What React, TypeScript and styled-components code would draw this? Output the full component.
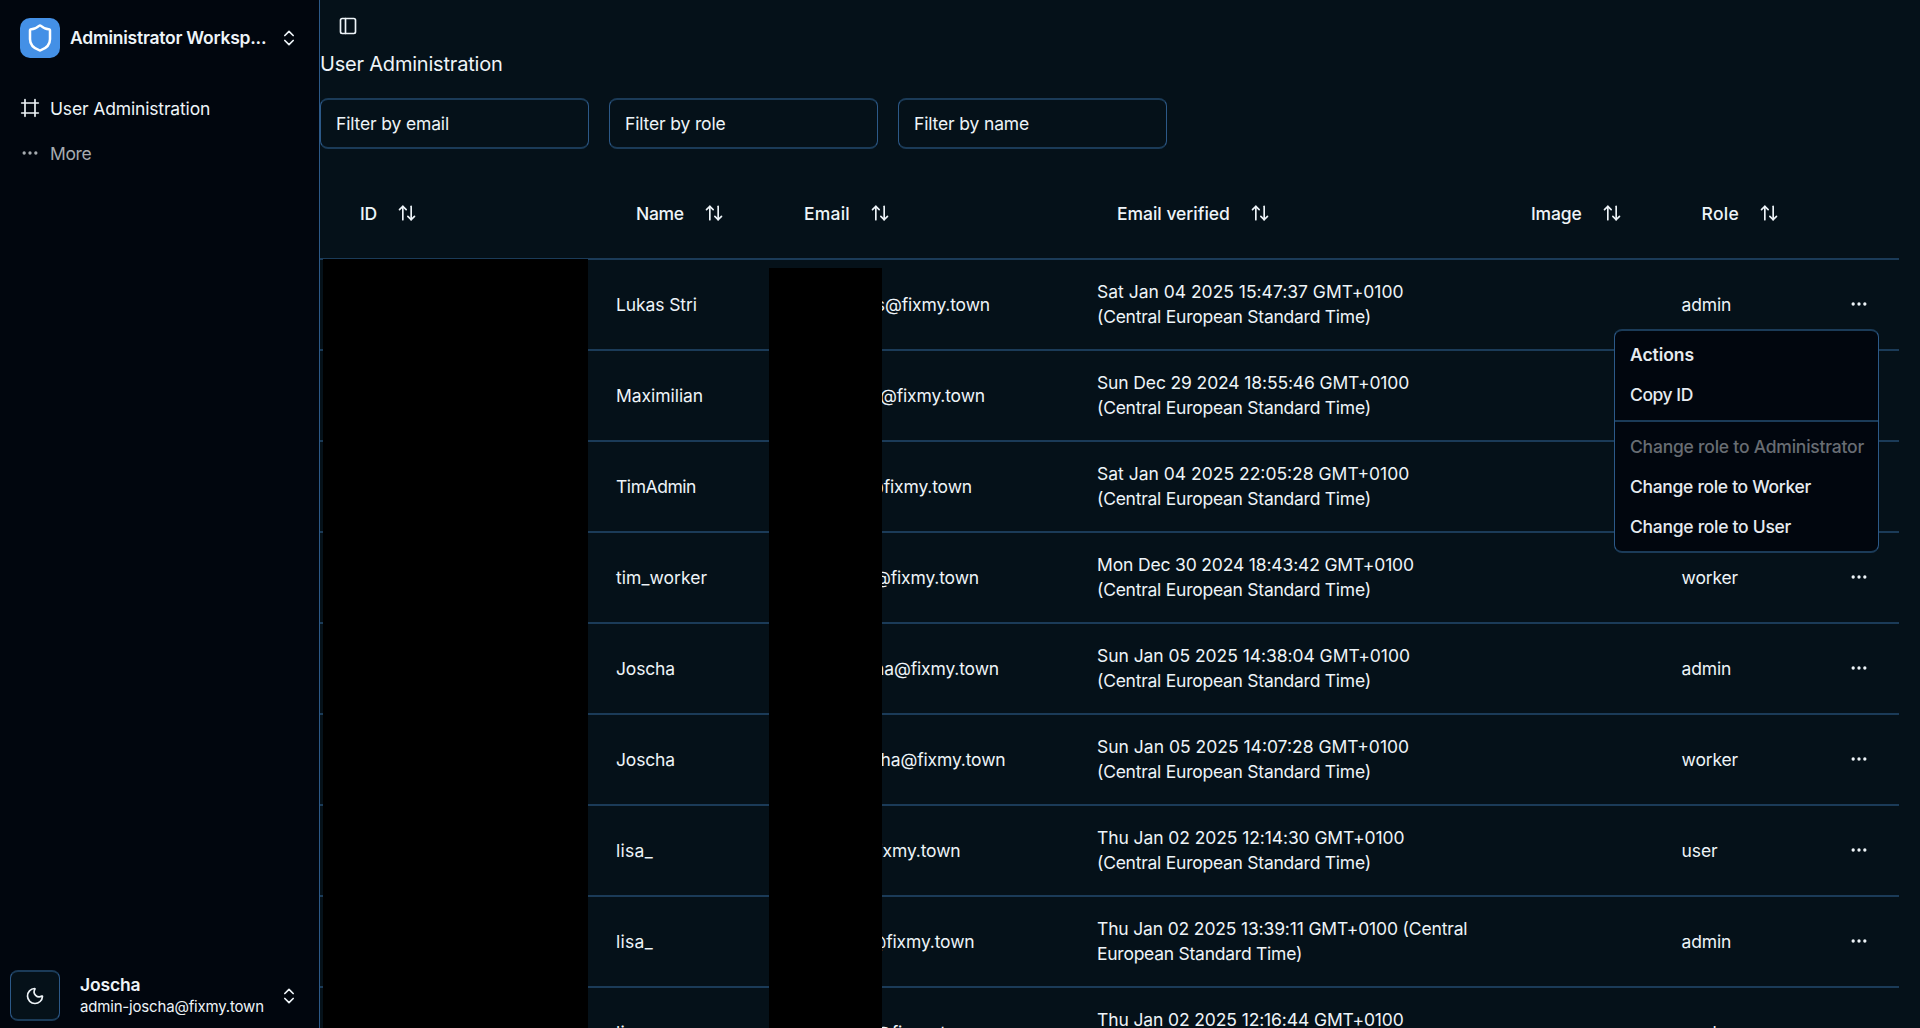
import React from "react";
import styled, { createGlobalStyle } from "styled-components";
import { ArrowUpDown, ChevronsUpDown, Ellipsis, Frame, Moon, PanelLeft, Shield } from "lucide-react";

const colors = {
  page: "#051119",
  sidebar: "#01060e",
  border: "#1b3b58",
  sideBorder: "#2c5988",
  text: "#eef4f8",
};

const GlobalStyle = createGlobalStyle`
  * { box-sizing: border-box; }
  html, body { margin: 0; height: 100%; overflow: hidden; background: ${colors.page}; }
  body { font-family: Inter, "Liberation Sans", sans-serif; font-size: 17.5px; line-height: 25px; color: ${colors.text}; letter-spacing: -0.15px; }
  button, input { font: inherit; color: inherit; letter-spacing: inherit; }
  svg { flex: none; }
`;

const Shell = styled.div`
  display: flex;
  width: 1920px;
  height: 1028px;
  overflow: hidden;
`;

const Sidebar = styled.aside`
  display: flex;
  flex-direction: column;
  width: 320px;
  flex: none;
  background: ${colors.sidebar};
  border-right: 1px solid ${colors.sideBorder};
`;

const Workspace = styled.div`
  display: flex;
  align-items: center;
  gap: 10px;
  height: 76px;
  padding: 0 20px;
`;

const Logo = styled.div`
  display: grid;
  place-items: center;
  width: 40px;
  height: 40px;
  border-radius: 10px;
  background: #4490e6;
  color: #fff;
`;

const WorkspaceName = styled.div`
  width: 199px;
  padding-bottom: 1px;
  font-weight: 600;
  letter-spacing: -0.24px;
  white-space: nowrap;
  overflow: hidden;
`;

const Nav = styled.nav`
  display: flex;
  flex-direction: column;
  gap: 5px;
  padding: 12px 10px;
`;

const NavItem = styled.a<{ $muted?: boolean }>`
  display: flex;
  align-items: center;
  gap: 10px;
  height: 40px;
  padding: 0 10px;
  color: ${(p) => (p.$muted ? "#a6abb0" : colors.text)};
  letter-spacing: ${(p) => (p.$muted ? -0.35 : -0.15)}px;
`;

const Footer = styled.div`
  display: flex;
  align-items: center;
  gap: 20px;
  margin-top: auto;
  height: 65px;
  padding: 0 20px 0 10px;
`;

const ThemeButton = styled.button`
  display: grid;
  place-items: center;
  width: 50px;
  height: 51px;
  padding: 0;
  border-style: solid;
  border-width: 2px 1px;
  border-color: ${colors.border} ${colors.sideBorder};
  border-radius: 8px;
  background: ${colors.page};
`;

const Account = styled.div`
  flex: 1;
  display: flex;
  flex-direction: column;
  min-width: 0;
`;

const AccountName = styled.span`
  font-weight: 600;
  line-height: 22px;
`;

const AccountMail = styled.span`
  font-size: 15px;
  line-height: 22px;
  letter-spacing: -0.18px;
  white-space: nowrap;
`;

const Main = styled.main`
  flex: 1;
  min-width: 0;
`;

const TopBar = styled.div`
  display: flex;
  align-items: center;
  height: 50px;
  padding: 2px 18px 0;
`;

const Title = styled.h1`
  margin: 0;
  font-size: 20px;
  font-weight: 400;
  line-height: 28px;
  letter-spacing: -0.2px;
`;

const Filters = styled.div`
  display: flex;
  gap: 20px;
  padding: 20px 0;
`;

const FilterInput = styled.input`
  width: 269px;
  height: 51px;
  padding: 0 15px;
  border-style: solid;
  border-width: 2px 1px;
  border-color: ${colors.border} ${colors.sideBorder};
  border-radius: 8px;
  background: transparent;
  outline: none;
  &::placeholder { color: ${colors.text}; opacity: 1; }
`;

const Table = styled.div`
  position: relative;
  width: 1579px;
`;

const Row = styled.div`
  display: grid;
  grid-template-columns: 276px 168px 313px 414px 170.6px 237.4px;
  align-items: center;
  height: 91px;
  padding-bottom: 1px;
  border-bottom: 2px solid ${colors.border};
`;

const Tracked = styled.span<{ $track?: number }>`
  letter-spacing: ${(p) => p.$track ?? -0.15}px;
`;

const HeadCell = styled.div`
  display: flex;
  align-items: center;
  gap: 20px;
  padding-left: 40px;
  font-weight: 500;
`;

const Cell = styled.div`
  padding: 0 20px;
  white-space: nowrap;
`;

const DateCell = styled(Cell)`
  display: flex;
  flex-direction: column;
  padding-bottom: 1px;
`;

const RoleCell = styled(Cell)`
  display: flex;
  justify-content: space-between;
  align-items: center;
  padding-right: 30px;
`;

const Mail = styled.div<{ $width: number }>`
  width: ${(p) => p.$width}px;
  text-align: right;
  white-space: nowrap;
`;

const Redaction = styled.div<{ $x: number; $y: number; $w: number }>`
  position: absolute;
  left: ${(p) => p.$x}px;
  top: ${(p) => p.$y}px;
  width: ${(p) => p.$w}px;
  height: 900px;
  background: #000;
`;

const Menu = styled.div`
  position: absolute;
  left: 1294px;
  top: 160px;
  width: 265px;
  height: 224px;
  padding: 4px 0;
  border-style: solid;
  border-width: 2px 1px;
  border-color: ${colors.border} ${colors.sideBorder};
  border-radius: 8px;
  background: ${colors.sidebar};
`;

const MenuItem = styled.div<{ $bold?: boolean; $disabled?: boolean; $track?: number }>`
  height: 40px;
  line-height: 40px;
  padding-left: 15px;
  white-space: nowrap;
  letter-spacing: ${(p) => p.$track ?? -0.22}px;
  font-weight: ${(p) => (p.$bold ? 600 : 450)};
  color: ${(p) => (p.$disabled ? "#686d73" : "#e6ebf0")};
`;

const MenuDivider = styled.div`
  height: 2px;
  margin: 5px 0;
  background: ${colors.border};
`;

type Column = { label: string; track?: number };

const columns: Column[] = [
  { label: "ID" },
  { label: "Name", track: -0.35 },
  { label: "Email", track: 0.2 },
  { label: "Email verified", track: -0.02 },
  { label: "Image", track: -0.15 },
  { label: "Role", track: 0.25 },
];

type User = {
  name: string;
  nameTrack?: number;
  mail: string;
  mailWidth: number;
  date: string;
  dateTrack: number;
  role: string;
  zone?: string;
};

const users: User[] = [
  { name: "Lukas Stri", nameTrack: -0.1, mail: "s@fixmy.town", mailWidth: 226, date: "Sat Jan 04 2025 15:47:37 GMT+0100", dateTrack: -0.01, role: "admin" },
  { name: "Maximilian", nameTrack: -0.05, mail: "@fixmy.town", mailWidth: 221, date: "Sun Dec 29 2024 18:55:46 GMT+0100", dateTrack: -0.13, role: "admin" },
  { name: "TimAdmin", nameTrack: -0.45, mail: "@fixmy.town", mailWidth: 208, date: "Sat Jan 04 2025 22:05:28 GMT+0100", dateTrack: 0, role: "admin" },
  { name: "tim_worker", nameTrack: 0.05, mail: "@fixmy.town", mailWidth: 215, date: "Mon Dec 30 2024 18:43:42 GMT+0100", dateTrack: -0.16, role: "worker" },
  { name: "Joscha", mail: "ha@fixmy.town", mailWidth: 235, date: "Sun Jan 05 2025 14:38:04 GMT+0100", dateTrack: -0.05, role: "admin" },
  { name: "Joscha", mail: "ha@fixmy.town", mailWidth: 241.5, date: "Sun Jan 05 2025 14:07:28 GMT+0100", dateTrack: 0, role: "worker" },
  { name: "lisa_", nameTrack: 0.3, mail: "@fixmy.town", mailWidth: 196.5, date: "Thu Jan 02 2025 12:14:30 GMT+0100", dateTrack: -0.09, role: "user" },
  { name: "lisa_", nameTrack: 0.3, mail: "@fixmy.town", mailWidth: 210.5, date: "Thu Jan 02 2025 13:39:11 GMT+0100 (Central", dateTrack: -0.16, role: "admin", zone: "European Standard Time)" },
  { name: "lisa_", nameTrack: 0.3, mail: "@fixmy.town", mailWidth: 216, date: "Thu Jan 02 2025 12:16:44 GMT+0100", dateTrack: -0.12, role: "worker" },
];

export default function App() {
  return (
    <Shell>
      <GlobalStyle />
      <Sidebar>
        <Workspace>
          <Logo><Shield size={30} /></Logo>
          <WorkspaceName>Administrator Worksp...</WorkspaceName>
          <ChevronsUpDown size={20} />
        </Workspace>
        <Nav>
          <NavItem><Frame size={20} />User Administration</NavItem>
          <NavItem $muted><Ellipsis size={20} />More</NavItem>
        </Nav>
        <Footer>
          <ThemeButton><Moon size={20} /></ThemeButton>
          <Account>
            <AccountName>Joscha</AccountName>
            <AccountMail>admin-joscha@fixmy.town</AccountMail>
          </Account>
          <ChevronsUpDown size={20} />
        </Footer>
      </Sidebar>
      <Main>
        <TopBar><PanelLeft size={20} /></TopBar>
        <Title>User Administration</Title>
        <Filters>
          {["email", "role", "name"].map((f) => (
            <FilterInput key={f} placeholder={`Filter by ${f}`} />
          ))}
        </Filters>
        <Table>
          <Row>
            {columns.map(({ label, track }) => (
              <HeadCell key={label}>
                <Tracked $track={track}>{label}</Tracked>
                <ArrowUpDown size={20} />
              </HeadCell>
            ))}
          </Row>
          {users.map((user, i) => (
            <Row key={i}>
              <Cell />
              <Cell><Tracked $track={user.nameTrack}>{user.name}</Tracked></Cell>
              <Mail $width={user.mailWidth}>{user.mail}</Mail>
              <DateCell>
                <Tracked $track={user.dateTrack}>{user.date}</Tracked>
                <Tracked $track={-0.25}>{user.zone ?? "(Central European Standard Time)"}</Tracked>
              </DateCell>
              <Cell />
              <RoleCell>
                {i !== 1 && i !== 2 && <>{user.role}<Ellipsis size={20} /></>}
              </RoleCell>
            </Row>
          ))}
          <Redaction $x={3} $y={90} $w={264.5} />
          <Redaction $x={449} $y={99} $w={113} />
          <Menu>
            <MenuItem $bold $track={-0.05}>Actions</MenuItem>
            <MenuItem $track={-0.45}>Copy ID</MenuItem>
            <MenuDivider />
            <MenuItem $disabled>Change role to Administrator</MenuItem>
            <MenuItem $track={-0.32}>Change role to Worker</MenuItem>
            <MenuItem $track={-0.28}>Change role to User</MenuItem>
          </Menu>
        </Table>
      </Main>
    </Shell>
  );
}
